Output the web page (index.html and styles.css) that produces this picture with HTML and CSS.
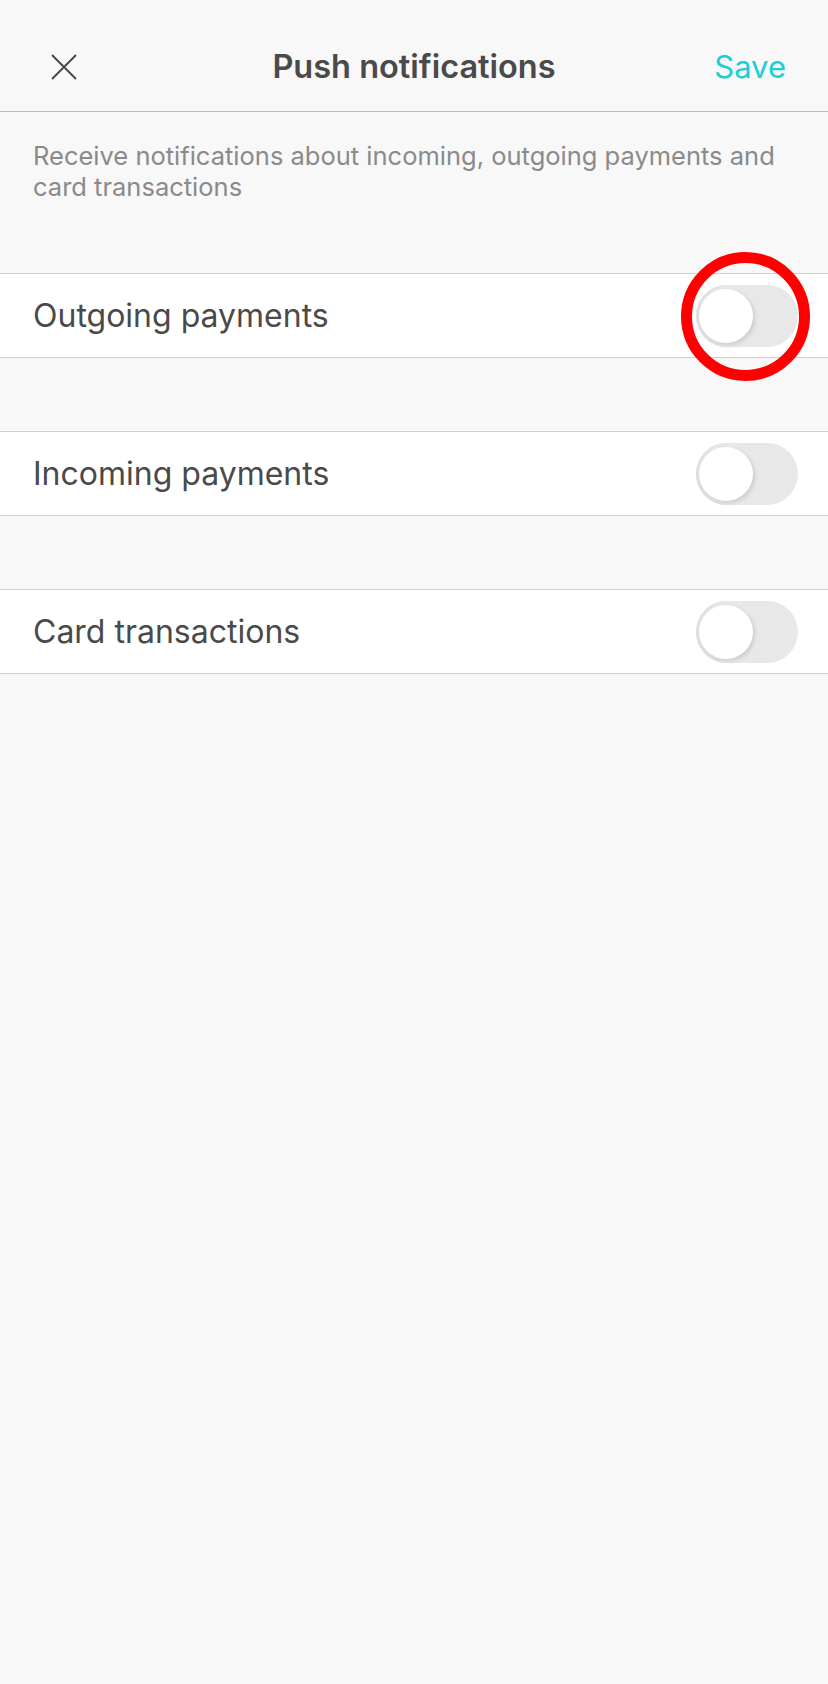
FILE: index.html
```html
<!DOCTYPE html>
<html lang="en">
	<head>
		<meta charset="UTF-8" />
		<title>Push notifications</title>
		<link rel="stylesheet" href="styles.css">
	</head>
	<body>
		<div class="header">
			<button class="close" aria-label="Close">
				<svg width="26" height="26" viewBox="0 0 26 26">
					<path d="M1 1 L25 25 M25 1 L1 25" stroke="#4a4a4a" stroke-width="2" fill="none" />
				</svg>
			</button>
			<h1>Push notifications</h1>
			<button class="save">Save</button>
		</div>

		<p class="intro">
			Receive notifications about incoming, outgoing payments and card transactions
		</p>

		<div class="row">
			<span>Outgoing payments</span>
			<span class="toggle"></span>
			<span class="marker"></span>
		</div>

		<div class="row">
			<span>Incoming payments</span>
			<span class="toggle"></span>
		</div>

		<div class="row">
			<span>Card transactions</span>
			<span class="toggle"></span>
		</div>
	</body>
</html>
```

FILE: styles.css
```css
body {
	margin: 0;
	background: #f8f8f8;
	font-family: Inter, "Noto Sans", sans-serif;
	color: #4a4a4a;
}
.header {
	height: 112px;
	display: grid;
	grid-template-columns: 1fr auto 1fr;
	align-items: center;
	padding: 22px 42px 0;
	box-sizing: border-box;
	border-bottom: 1px solid #bdbdbd;
}
.header h1 {
	margin: 0;
	font-size: 32.5px;
	font-weight: 600;
	color: #4a4a4a;
}
.close,
.save {
	background: none;
	border: none;
	padding: 0;
	font-family: inherit;
}
.close {
	justify-self: start;
	margin-left: 9px;
}
.close svg {
	display: block;
}
.save {
	justify-self: end;
	font-size: 31px;
	color: #1ccfd4;
}
.intro {
	margin: 0;
	padding: 28px 33px 0;
	font-size: 25.5px;
	line-height: 31px;
	color: #8a8a8a;
	height: 133px;
}
.row {
	position: relative;
	height: 83px;
	display: flex;
	align-items: center;
	justify-content: space-between;
	padding: 0 30px 0 33px;
	background: #fff;
	border-top: 1px solid #cfcfcf;
	border-bottom: 1px solid #cfcfcf;
	margin-bottom: 73px;
	font-size: 32px;
}
.toggle {
	position: relative;
	width: 102px;
	height: 62px;
	border-radius: 31px;
	background: #e8e8e8;
	box-shadow: inset 3px 0 0 #e0e0e0;
}
.toggle::after {
	content: "";
	position: absolute;
	left: 3px;
	top: 4px;
	width: 54px;
	height: 54px;
	border-radius: 50%;
	background: #fff;
	box-shadow: 2px 2px 4px rgba(0, 0, 0, 0.12);
}
.marker {
	position: absolute;
	left: 681px;
	top: -22px;
	width: 129px;
	height: 129px;
	box-sizing: border-box;
	border: 11px solid #ff0000;
	border-radius: 50%;
}
```
